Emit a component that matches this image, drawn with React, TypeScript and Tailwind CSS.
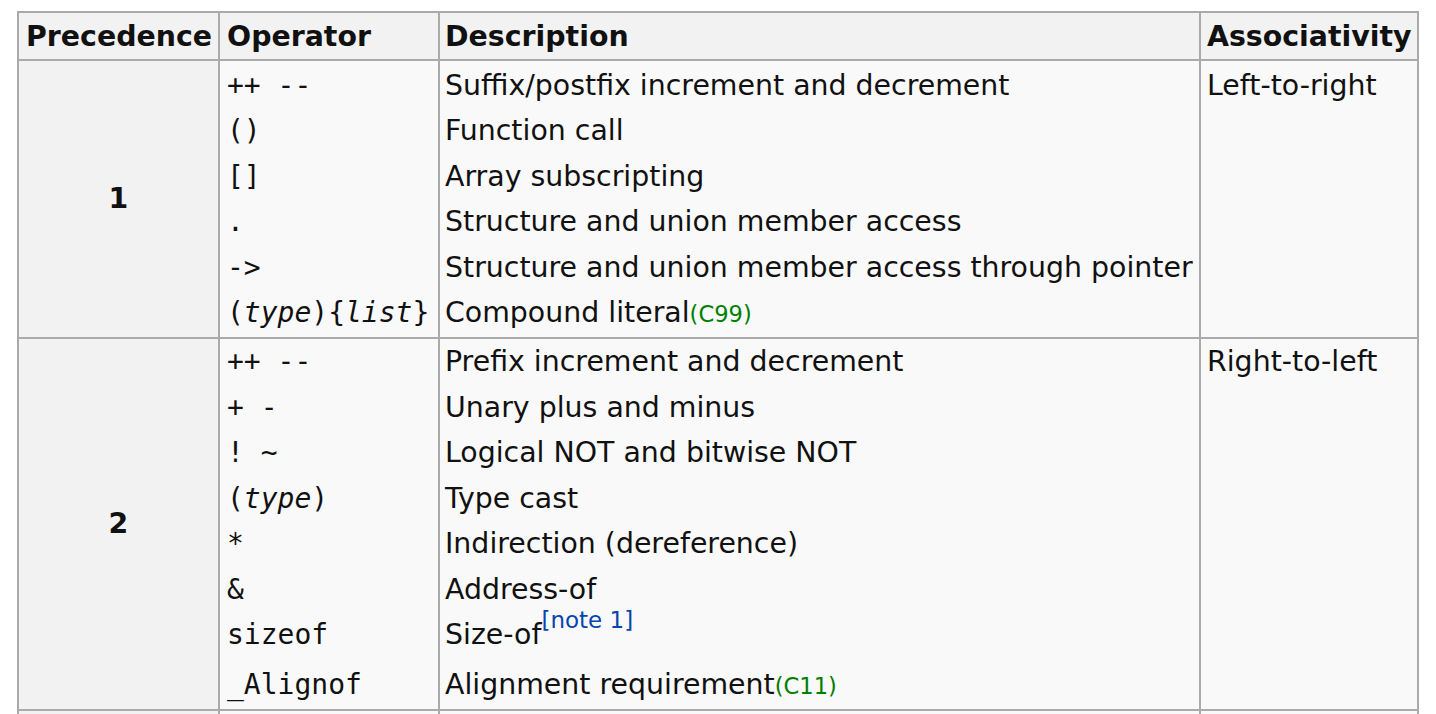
import React from "react";

const sans = { fontFamily: "'DejaVu Sans', Verdana, sans-serif" };

type Line = { op: React.ReactNode; desc: React.ReactNode; h: string };

const Mono = ({ children }: { children: React.ReactNode }) => (
  <span className="font-['DejaVu_Sans_Mono',monospace] text-[28px] whitespace-pre">{children}</span>
);

const Green = ({ children }: { children: React.ReactNode }) => (
  <span className="text-[22.6px] text-[#008000]">{children}</span>
);

const group1: Line[] = [
  { op: <Mono>++ --</Mono>, desc: "Suffix/postfix increment and decrement", h: "h-[45.5px]" },
  { op: <Mono>()</Mono>, desc: "Function call", h: "h-[45.5px]" },
  { op: <Mono>[]</Mono>, desc: "Array subscripting", h: "h-[45.5px]" },
  { op: <Mono>.</Mono>, desc: "Structure and union member access", h: "h-[45.5px]" },
  { op: <Mono>-&gt;</Mono>, desc: "Structure and union member access through pointer", h: "h-[45.5px]" },
  {
    op: (
      <Mono>
        (<i>type</i>){"{"}
        <i>list</i>
        {"}"}
      </Mono>
    ),
    desc: (
      <>
        Compound literal<Green>(C99)</Green>
      </>
    ),
    h: "h-[45.5px]",
  },
];

const group2: Line[] = [
  { op: <Mono>++ --</Mono>, desc: "Prefix increment and decrement", h: "h-[45.5px]" },
  { op: <Mono>+ -</Mono>, desc: "Unary plus and minus", h: "h-[45.5px]" },
  { op: <Mono>! ~</Mono>, desc: "Logical NOT and bitwise NOT", h: "h-[45.5px]" },
  {
    op: (
      <Mono>
        (<i>type</i>)
      </Mono>
    ),
    desc: "Type cast",
    h: "h-[45.5px]",
  },
  { op: <Mono>*</Mono>, desc: "Indirection (dereference)", h: "h-[45.5px]" },
  { op: <Mono>&amp;</Mono>, desc: "Address-of", h: "h-[45.5px]" },
  {
    op: <Mono>sizeof</Mono>,
    desc: (
      <>
        Size-of
        <sup className="text-[23px] text-[#0645ad] top-[-16px]">[note 1]</sup>
      </>
    ),
    h: "h-[50px]",
  },
  {
    op: <Mono>_Alignof</Mono>,
    desc: (
      <>
        Alignment requirement<Green>(C11)</Green>
      </>
    ),
    h: "h-[47px]",
  },
];

function Group({
  prec,
  lines,
  assoc,
  pad,
}: {
  prec: string;
  lines: Line[];
  assoc: string;
  pad: string;
}) {
  return (
    <div className="flex border-b-2 border-[#aaaaaa]">
      <div className="w-[201px] shrink-0 border-r-2 border-[#aaaaaa] bg-[#f2f2f2] flex items-center justify-center font-bold">
        {prec}
      </div>
      <div className={`w-[220px] shrink-0 border-r-2 border-[#aaaaaa] bg-[#f9f9f9] px-[7px] ${pad}`}>
        {lines.map((l, i) => (
          <div key={i} className={`${l.h} leading-[45.5px] whitespace-nowrap`}>
            {l.op}
          </div>
        ))}
      </div>
      <div className={`w-[761px] shrink-0 border-r-2 border-[#aaaaaa] bg-[#f9f9f9] px-[5px] ${pad}`}>
        {lines.map((l, i) => (
          <div key={i} className={`${l.h} leading-[45.5px] whitespace-nowrap`}>
            {l.desc}
          </div>
        ))}
      </div>
      <div className={`w-[216px] shrink-0 bg-[#f9f9f9] px-[6px] ${pad}`}>
        <div className="h-[45.5px] leading-[45.5px] whitespace-nowrap">{assoc}</div>
      </div>
    </div>
  );
}

export default function App() {
  return (
    <div className="w-[1436px] h-[714px] overflow-hidden bg-white pt-[11px] pl-[17px] text-[28.4px] text-[#111]" style={sans}>
      <div className="w-[1402px] border-2 border-[#aaaaaa]">
        <div className="flex h-[48px] border-b-2 border-[#aaaaaa] bg-[#f2f2f2] font-bold leading-[47px]">
          <div className="w-[201px] shrink-0 border-r-2 border-[#aaaaaa] px-[7px] whitespace-nowrap">Precedence</div>
          <div className="w-[220px] shrink-0 border-r-2 border-[#aaaaaa] px-[7px] whitespace-nowrap">Operator</div>
          <div className="w-[761px] shrink-0 border-r-2 border-[#aaaaaa] px-[5px] whitespace-nowrap">Description</div>
          <div className="w-[216px] shrink-0 px-[6px] whitespace-nowrap">Associativity</div>
        </div>
        <Group prec="1" lines={group1} assoc="Left-to-right" pad="pt-[1.5px] pb-[1.5px]" />
        <Group prec="2" lines={group2} assoc="Right-to-left" pad="pt-0 pb-0" />
        <div className="flex h-[40px]">
          <div className="w-[201px] shrink-0 border-r-2 border-[#aaaaaa] bg-[#f2f2f2]" />
          <div className="w-[220px] shrink-0 border-r-2 border-[#aaaaaa] bg-[#f9f9f9]" />
          <div className="w-[761px] shrink-0 border-r-2 border-[#aaaaaa] bg-[#f9f9f9]" />
          <div className="w-[216px] shrink-0 bg-[#f9f9f9]" />
        </div>
      </div>
    </div>
  );
}
